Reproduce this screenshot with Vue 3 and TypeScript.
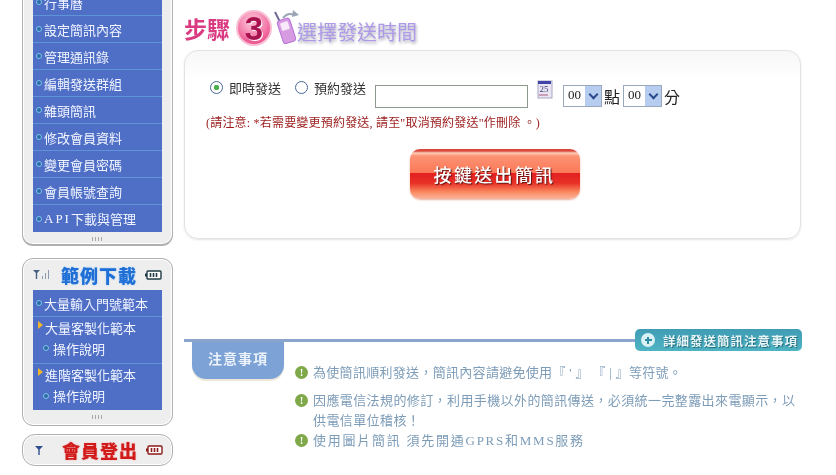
<script setup lang="ts">
interface MenuItem {
  label: string
  prefix?: string
  kind?: 'plain' | 'pointer' | 'sub'
  line?: boolean
}

const mainMenu: MenuItem[] = [
  { label: '行事曆', line: true },
  { label: '設定簡訊內容', line: true },
  { label: '管理通訊錄', line: true },
  { label: '編輯發送群組', line: true },
  { label: '雜頭簡訊', line: true },
  { label: '修改會員資料', line: true },
  { label: '變更會員密碼', line: true },
  { label: '會員帳號查詢', line: true },
  { label: '下載與管理', prefix: 'API' },
]

const sampleMenu: MenuItem[] = [
  { label: '大量輸入門號範本', kind: 'plain', line: true },
  { label: '大量客製化範本', kind: 'pointer' },
  { label: '操作說明', kind: 'sub', line: true },
  { label: '進階客製化範本', kind: 'pointer' },
  { label: '操作說明', kind: 'sub' },
]

const notes = [
  { text: '為使簡訊順利發送\uFF0C簡訊內容請避免使用『 \' 』 『 | 』等符號。', cls: 'first' },
  { text: '因應電信法規的修訂\uFF0C利用手機以外的簡訊傳送\uFF0C必須統一完整露出來電顯示\uFF0C以供電信單位稽核\uFF01', cls: 'second' },
  { text: '使用圖片簡訊 須先開通GPRS和MMS服務', cls: 'third' },
]
</script>

<template>
  <div class="page">
    <aside class="sidebar">
      <div class="phone phone-top">
        <ul class="menu">
          <li v-for="item in mainMenu" :key="item.label" class="row main-row" :class="{ line: item.line }">
            <i class="dot"></i><span v-if="item.prefix" class="latin">{{ item.prefix }}</span>{{ item.label }}
          </li>
        </ul>
        <div class="grip"></div>
      </div>

      <div class="phone phone-samples">
        <div class="phone-head">
          <svg class="signal" width="17" height="11" viewBox="0 0 17 11">
            <path d="M0 1h7L4.200 4v6H2.800V4z" fill="#47617f" />
            <path d="M9 7h1v3H9zM12 4h1v6h-1zM15 1h1v9h-1z" fill="#8b9bb0" />
          </svg>
          <span class="head-title blue">範例下載</span>
          <svg class="battery" width="17" height="10" viewBox="0 0 17 10">
            <path d="M0 3.500h2v3H0z" fill="#1f3a44" />
            <rect x="2" y="1" width="14" height="8" rx="1" fill="#fff" stroke="#1f3a44" stroke-width="1.4" />
            <path d="M5.500 3v4M8.500 3v4M11.500 3v4" stroke="#1f3a44" stroke-width="1.6" />
          </svg>
        </div>
        <ul class="menu">
          <li v-for="(item, i) in sampleMenu" :key="i" class="row sample-row" :class="[item.kind, { line: item.line }]">
            <i v-if="item.kind === 'pointer'" class="arrow"></i>
            <i v-else class="dot"></i>{{ item.label }}
          </li>
        </ul>
        <div class="grip"></div>
      </div>

      <div class="phone phone-logout">
        <svg class="signal" width="12" height="11" viewBox="0 0 12 11">
          <path d="M1 1h8L5.700 4.500V10H4.300V4.500z" fill="#2f4f8f" />
        </svg>
        <span class="head-title red">會員登出</span>
        <svg class="battery" width="17" height="10" viewBox="0 0 17 10">
          <path d="M0 3.500h2v3H0z" fill="#8e1a1a" />
          <rect x="2" y="1" width="14" height="8" rx="1" fill="#fff" stroke="#8e1a1a" stroke-width="1.4" />
          <path d="M5.500 3v4M8.500 3v4M11.500 3v4" stroke="#8e1a1a" stroke-width="1.6" />
        </svg>
      </div>
    </aside>

    <main class="content">
      <header class="step">
        <span class="step-word">步驟</span>
        <span class="step-num">3</span>
        <svg class="step-phone" width="26" height="34" viewBox="0 0 26 34">
          <path d="M9 8q5-6 11-3" fill="none" stroke="#9aa4b4" stroke-width="2" />
          <path d="M19 0l6 5-7 2z" fill="#9aa4b4" />
          <path d="M1 2l5 10" stroke="#6f6a98" stroke-width="2" />
          <g transform="rotate(-18 12 21)">
            <rect x="6" y="9" width="13" height="24" rx="3" fill="#d79be2" stroke="#b574d4" />
            <rect x="8.500" y="12" width="8" height="8" rx="1" fill="#f7e8fa" />
          </g>
        </svg>
        <span class="step-title">選擇發送時間</span>
      </header>

      <section class="card">
        <div class="form-row">
          <label class="radio-label"><i class="radio checked"></i>即時發送</label>
          <label class="radio-label second"><i class="radio"></i>預約發送</label>
          <div class="date-input"></div>
          <svg class="calendar" width="17" height="19" viewBox="0 0 17 19">
            <rect x="1" y="1" width="14" height="17" fill="#e9e6f2" stroke="#a9a5c8" />
            <rect x="1" y="1" width="13" height="3" fill="#3f44a8" />
            <text x="2.500" y="12" font-size="9" fill="#3a3a7a" font-family="Liberation Serif, serif">25</text>
            <rect x="2" y="14" width="9" height="2" fill="#c9a0b8" />
          </svg>
          <div class="fake-select"><span>00</span><b><i></i></b></div>
          <span class="unit">點</span>
          <div class="fake-select"><span>00</span><b><i></i></b></div>
          <span class="unit">分</span>
        </div>
        <p class="warn">(請注意: *若需要變更預約發送, 請至"取消預約發送"作刪除 。)</p>
        <div class="submit-wrap">
          <div class="submit"><span>按鍵送出簡訊</span></div>
        </div>
      </section>

      <section class="notes">
        <div class="notes-rule">
          <div class="notes-link"><i class="plus"></i>詳細發送簡訊注意事項</div>
        </div>
        <div class="notes-body">
          <div class="notes-tab">注意事項</div>
          <ul class="notes-list">
            <li v-for="note in notes" :key="note.cls" :class="note.cls">
              <i class="bang">!</i>{{ note.text }}
            </li>
          </ul>
        </div>
      </section>
    </main>
  </div>
</template>

<style scoped>
.page {
  display: flex;
  width: 836px;
  height: 475px;
  overflow: hidden;
  background: #fff;
  font-family: "Liberation Serif", "Noto Sans CJK TC", serif;
  filter: blur(0.3px);
}

.sidebar {
  width: 151px;
  margin: -12px 11px 0 22px;
  flex-shrink: 0;
}

.phone {
  box-sizing: border-box;
  border: 1px solid #b0b0b0;
  border-radius: 11px;
  background: #eeeeee;
  box-shadow: inset 0 0 0 1px #fff;
  padding: 0 10px;
}

.phone-top {
  height: 258px;
  border-bottom-width: 2px;
}

.phone-samples {
  height: 168px;
  margin-top: 12px;
}

.phone-logout {
  height: 32px;
  margin-top: 8px;
  display: flex;
  align-items: center;
  padding: 0 9px 0 11px;
  border-radius: 13px;
}

.phone-logout .head-title {
  margin-left: 16px;
}

.phone-head {
  height: 31px;
  display: flex;
  align-items: center;
}

.head-title {
  font-family: "Noto Sans CJK TC", sans-serif;
  font-size: 18px;
  font-weight: 900;
  letter-spacing: 1px;
  line-height: 1;
  white-space: nowrap;
}

.head-title.blue {
  color: #1f6fd6;
  margin-left: 11px;
  text-shadow: 0 0 2px #9cc8f5;
}

.head-title.red {
  color: #d11a1a;
  text-shadow: 0 0 2px #f5b0b0;
}

.battery {
  margin-left: auto;
}

.menu {
  list-style: none;
  margin: 0;
  padding: 0;
  background: #4f6fc7;
  color: #f2f5ff;
}

.row {
  box-sizing: border-box;
  display: flex;
  align-items: center;
  padding-left: 3px;
  font-size: 13px;
  white-space: nowrap;
}

.row.line {
  border-bottom: 1px solid #5f93d8;
}

.latin {
  letter-spacing: 2px;
}

.main-row {
  height: 27px;
}

.sample-row.plain {
  height: 27px;
}

.sample-row.sub {
  height: 25px;
  padding: 0 0 4px 10px;
}

.sample-row.sub.line {
  height: 26px;
  padding-bottom: 5px;
}

.sample-row.pointer {
  height: 21px;
}

.dot {
  width: 4px;
  height: 4px;
  margin-right: 2px;
  flex-shrink: 0;
  border: 1px solid #7fc4e8;
  border-radius: 50%;
  background: #2c6aa8;
}

.sub .dot {
  margin-right: 4px;
}

.arrow {
  width: 0;
  height: 0;
  margin: -6px 2px 0 2px;
  flex-shrink: 0;
  border-left: 5px solid #f0b52e;
  border-top: 4px solid transparent;
  border-bottom: 4px solid transparent;
}

.grip {
  width: 11px;
  height: 4px;
  margin: 5px auto 0;
  background: repeating-linear-gradient(90deg, #a6a6a6 0 1px, transparent 1px 3px);
}

.content {
  width: 620px;
  flex-shrink: 0;
}

.step {
  height: 50px;
  display: flex;
  align-items: center;
  padding-top: 6px;
  box-sizing: border-box;
}

.step-word {
  font-family: "Noto Sans CJK TC", sans-serif;
  font-size: 23px;
  font-weight: 700;
  color: #d93a80;
  line-height: 1;
  margin-right: 6px;
}

.step-num {
  box-sizing: border-box;
  width: 36px;
  height: 36px;
  line-height: 34px;
  text-align: center;
  border-radius: 50%;
  border: 2px solid #f9bdd3;
  background: radial-gradient(circle at 45% 30%, #f9a8c6 0 25%, #ee5d96 70%, #e3417f 100%);
  color: #a8124f;
  font-size: 33px;
  font-weight: 700;
  font-family: "Liberation Sans", sans-serif;
  text-shadow: 1px 1px 0 #fff;
}

.step-phone {
  margin: -2px -3px 0 2px;
}

.step-title {
  margin: 7px 0 0 0;
  font-family: "Noto Sans CJK TC", sans-serif;
  font-size: 20px;
  color: #ae9ae6;
  text-shadow: 1px 2px 3px #a9a9b8;
  line-height: 1;
}

.card {
  box-sizing: border-box;
  width: 617px;
  height: 189px;
  border: 1px solid #e2e2e2;
  border-radius: 14px;
  background: linear-gradient(#f7f7f7, #fff 30px);
  box-shadow: 0 1px 2px #e4e4e4;
  padding-top: 28px;
}

.form-row {
  display: flex;
  align-items: flex-start;
  padding-left: 25px;
  height: 35px;
}

.radio-label {
  display: flex;
  align-items: center;
  height: 16px;
  font-size: 13px;
  color: #333;
}

.radio-label.second {
  margin-left: 14px;
}

.radio {
  box-sizing: border-box;
  width: 13px;
  height: 13px;
  margin-right: 6px;
  border: 1px solid #4a6a96;
  border-radius: 50%;
  background: #fff;
}

.radio.checked {
  background: radial-gradient(circle, #4fae4f 0 2.500px, #fff 3px);
}

.date-input {
  box-sizing: border-box;
  width: 153px;
  height: 23px;
  margin: 6px 0 0 9px;
  border: 1px solid #8e9a8e;
  background: #fff;
}

.calendar {
  margin: 1px 0 0 9px;
}

.fake-select {
  box-sizing: border-box;
  display: flex;
  width: 39px;
  height: 22px;
  margin: 6px 0 0 9px;
  border: 1px solid #9aa8bc;
  background: #fff;
}

.unit + .fake-select {
  margin-left: 3px;
}

.fake-select span {
  flex: 1;
  font-size: 13px;
  line-height: 18px;
  padding-left: 4px;
  color: #222;
}

.fake-select b {
  width: 16px;
  display: flex;
  align-items: center;
  justify-content: center;
  background: #b6cdf0;
}

.fake-select b i {
  width: 5px;
  height: 5px;
  margin-top: -3px;
  border-right: 2px solid #2b4b8c;
  border-bottom: 2px solid #2b4b8c;
  transform: rotate(45deg);
}

.unit {
  margin: 9px 0 0 2px;
  font-size: 16px;
  line-height: 20px;
  color: #222;
}

.warn {
  margin: 0 0 0 21px;
  height: 18px;
  line-height: 18px;
  font-size: 12px;
  letter-spacing: 0.2px;
  color: #9c1c1c;
  white-space: nowrap;
}

.submit-wrap {
  display: flex;
  justify-content: center;
  margin-top: 17px;
  padding-left: 4px;
}

.submit {
  box-sizing: border-box;
  width: 170px;
  height: 50px;
  display: flex;
  align-items: center;
  justify-content: center;
  border-radius: 10px;
  background: linear-gradient(#d9483c 0 4%, #ffd0b8 8%, #fb9274 14%, #fb7a58 47%, #e22020 48%, #e83026 68%, #fb8a60 86%, #fab4a0 100%);
  box-shadow: 0 1px 2px #e8b0a0;
}

.submit span {
  font-family: "Noto Sans CJK TC", sans-serif;
  font-size: 18px;
  font-weight: 500;
  letter-spacing: 2.300px;
  color: #fff;
  text-shadow: 1px 1px 1px #5b1414;
}

.notes {
  margin-top: 100px;
}

.notes-rule {
  position: relative;
  height: 3px;
  width: 453px;
  background: #8ba5cc;
}

.notes-link {
  position: absolute;
  left: 451px;
  top: -10px;
  width: 167px;
  height: 22px;
  box-sizing: border-box;
  display: flex;
  align-items: center;
  padding-left: 6px;
  border-radius: 5px;
  background: linear-gradient(#3f9cb4, #4fb4c4);
  color: #e8f6f8;
  font-size: 12.500px;
  font-weight: 700;
  letter-spacing: 1px;
  white-space: nowrap;
  text-shadow: 1px 1px 1px #1e6878;
}

.plus {
  box-sizing: border-box;
  width: 14px;
  height: 14px;
  margin-right: 8px;
  flex-shrink: 0;
  border-radius: 50%;
  background:
    linear-gradient(#2f8ca4, #2f8ca4) center / 7px 2px no-repeat,
    linear-gradient(#2f8ca4, #2f8ca4) center / 2px 7px no-repeat,
    #d9f0f4;
}

.notes-body {
  display: flex;
  align-items: flex-start;
}

.notes-tab {
  box-sizing: border-box;
  width: 92px;
  height: 37px;
  margin-left: 8px;
  padding-top: 6px;
  text-align: center;
  border-radius: 0 0 14px 14px;
  background: #7da2d6;
  box-shadow: 0 2px 1px #ece7da;
  color: #edf3fb;
  font-size: 14px;
  font-weight: 700;
  letter-spacing: 1px;
}

.notes-list {
  list-style: none;
  margin: 0 0 0 11px;
  padding: 0;
  width: 502px;
  font-size: 13px;
  letter-spacing: 0.4px;
  color: #7d9cb8;
}

.notes-list li {
  position: relative;
  padding-left: 18px;
  line-height: 20px;
}

.notes-list .first {
  margin-top: 21px;
  letter-spacing: 0.3px;
}

.notes-list .second {
  margin-top: 8px;
}

.notes-list .third {
  letter-spacing: 1.750px;
}

.bang {
  position: absolute;
  left: 0;
  top: 3px;
  width: 13px;
  height: 13px;
  border-radius: 50%;
  background: #7fa848;
  color: #fff;
  font-style: normal;
  font-weight: 700;
  font-size: 11px;
  line-height: 13px;
  letter-spacing: 0;
  text-align: center;
}
</style>
